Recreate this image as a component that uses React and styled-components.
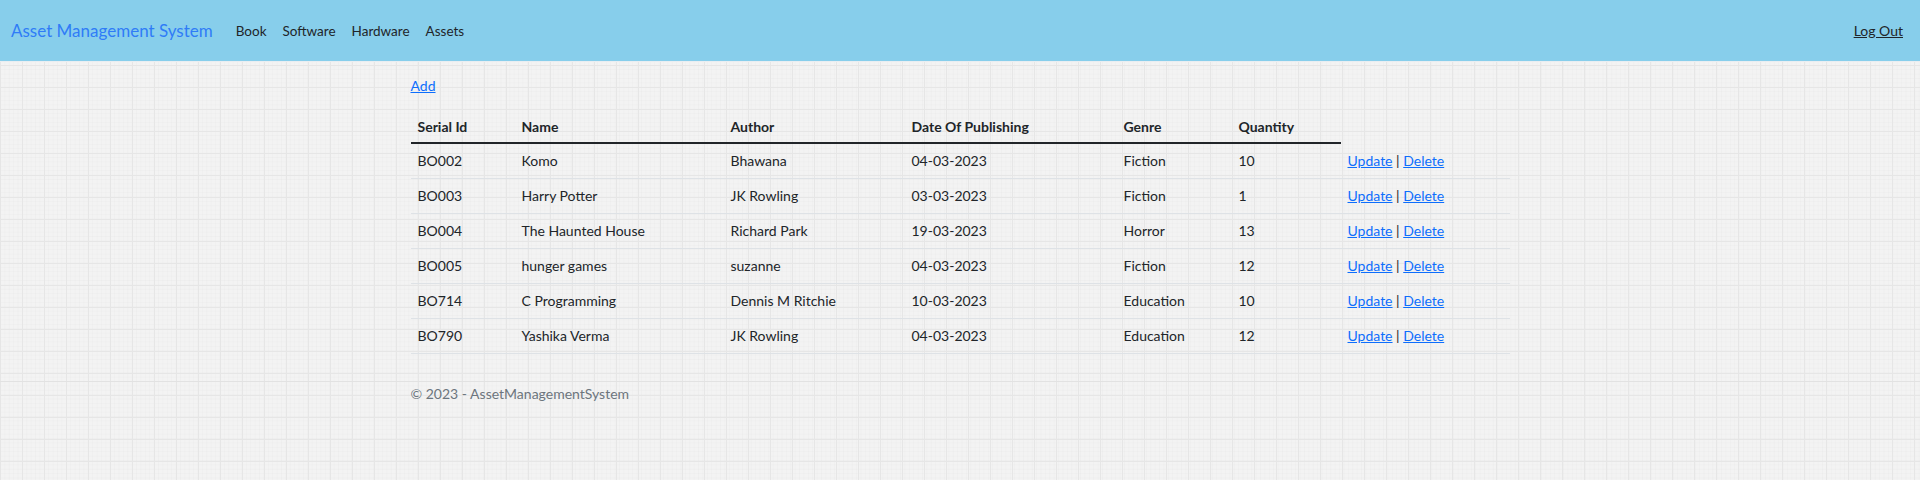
import React from 'react';
import styled, { createGlobalStyle } from 'styled-components';

const GlobalStyle = createGlobalStyle`
	html, body {
		margin: 0;
		min-height: 100%;
	}

	body {
		font-family: Lato, "Open Sans", sans-serif;
		font-size: 14px;
		line-height: 20px;
		color: #212529;
		background-color: #f3f3f3;
		background-image:
			linear-gradient(#e6e6e6 1px, transparent 1px),
			linear-gradient(90deg, #e6e6e6 1px, transparent 1px),
			linear-gradient(rgba(0, 0, 0, 0.015) 1px, transparent 1px),
			linear-gradient(90deg, rgba(0, 0, 0, 0.015) 1px, transparent 1px);
		background-size: 22px 22px, 22px 22px, 4.4px 4.4px, 4.4px 4.4px;
		background-position: 0 -1px, 0 0, 0 -1px, 0 0;
	}
`

const Navbar = styled.nav`
	display: flex;
	align-items: center;
	height: 61px;
	padding: 0 17px 0 11px;
	background-color: #87ceeb;
	border-bottom: 1px solid #e9eef2;
	margin-bottom: 14px;
`

const Brand = styled.a`
	font-size: 17px;
	color: #2f7cf7;
	text-decoration: none;
	margin-right: 15px;
	white-space: nowrap;
`

const NavList = styled.ul`
	display: flex;
	list-style: none;
	margin: 0;
	padding: 0;
	flex: 1;
`

const NavLink = styled.a`
	display: block;
	padding: 0 8px;
	font-size: 13.5px;
	color: #212529;
	text-decoration: none;
`

const LogOut = styled.a`
	font-size: 14px;
	color: #212529;
	text-decoration: underline;
`

const Container = styled.main`
	width: 1099px;
	margin: 0 auto;
`

const AddLink = styled.a`
	display: inline-block;
	margin-bottom: 12px;
	color: #0d6efd;
	text-decoration: underline;
`

const Table = styled.table`
	width: 100%;
	table-layout: fixed;
	border-collapse: collapse;
	margin-bottom: 27px;
`

const HeadCell = styled.th`
	text-align: left;
	font-weight: 700;
	padding: 9px 7px 5px;
	border-bottom: 2px solid #212529;
`

const Cell = styled.td`
	padding: 7px;
	border-bottom: 1px solid #dee2e6;
	white-space: nowrap;
`

const ActionLink = styled.a`
	color: #0d6efd;
	text-decoration: underline;
`

const Footer = styled.footer`
	border-top: 1px solid #e2e2e2;
	line-height: 24px;
	color: #6c757d;
`

const FooterInner = styled.div`
	width: 1099px;
	margin: 0 auto;
`

const columns = [104, 209, 181, 212, 115, 109, 169];

const headers = ['Serial Id', 'Name', 'Author', 'Date Of Publishing', 'Genre', 'Quantity'];

const books = [
	{ id: 'BO002', name: 'Komo', author: 'Bhawana', date: '04-03-2023', genre: 'Fiction', qty: 10 },
	{ id: 'BO003', name: 'Harry Potter', author: 'JK Rowling', date: '03-03-2023', genre: 'Fiction', qty: 1 },
	{ id: 'BO004', name: 'The Haunted House', author: 'Richard Park', date: '19-03-2023', genre: 'Horror', qty: 13 },
	{ id: 'BO005', name: 'hunger games', author: 'suzanne', date: '04-03-2023', genre: 'Fiction', qty: 12 },
	{ id: 'BO714', name: 'C Programming', author: 'Dennis M Ritchie', date: '10-03-2023', genre: 'Education', qty: 10 },
	{ id: 'BO790', name: 'Yashika Verma', author: 'JK Rowling', date: '04-03-2023', genre: 'Education', qty: 12 },
];

export default function App() {
	return (
		<>
			<GlobalStyle />
			<Navbar>
				<Brand href="#">Asset Management System</Brand>
				<NavList>
					<li><NavLink href="#">Book</NavLink></li>
					<li><NavLink href="#">Software</NavLink></li>
					<li><NavLink href="#">Hardware</NavLink></li>
					<li><NavLink href="#">Assets</NavLink></li>
				</NavList>
				<LogOut href="#">Log Out</LogOut>
			</Navbar>
			<Container>
				<AddLink href="#">Add</AddLink>
				<Table>
					<colgroup>
						{columns.map((w, i) => <col key={i} style={{ width: w }} />)}
					</colgroup>
					<thead>
						<tr>
							{headers.map(h => <HeadCell key={h}>{h}</HeadCell>)}
						</tr>
					</thead>
					<tbody>
						{books.map(book => (
							<tr key={book.id}>
								<Cell>{book.id}</Cell>
								<Cell>{book.name}</Cell>
								<Cell>{book.author}</Cell>
								<Cell>{book.date}</Cell>
								<Cell>{book.genre}</Cell>
								<Cell>{book.qty}</Cell>
								<Cell>
									<ActionLink href="#">Update</ActionLink> | <ActionLink href="#">Delete</ActionLink>
								</Cell>
							</tr>
						))}
					</tbody>
				</Table>
			</Container>
			<Footer>
				<FooterInner>&copy; 2023 - AssetManagementSystem</FooterInner>
			</Footer>
		</>
	);
}
